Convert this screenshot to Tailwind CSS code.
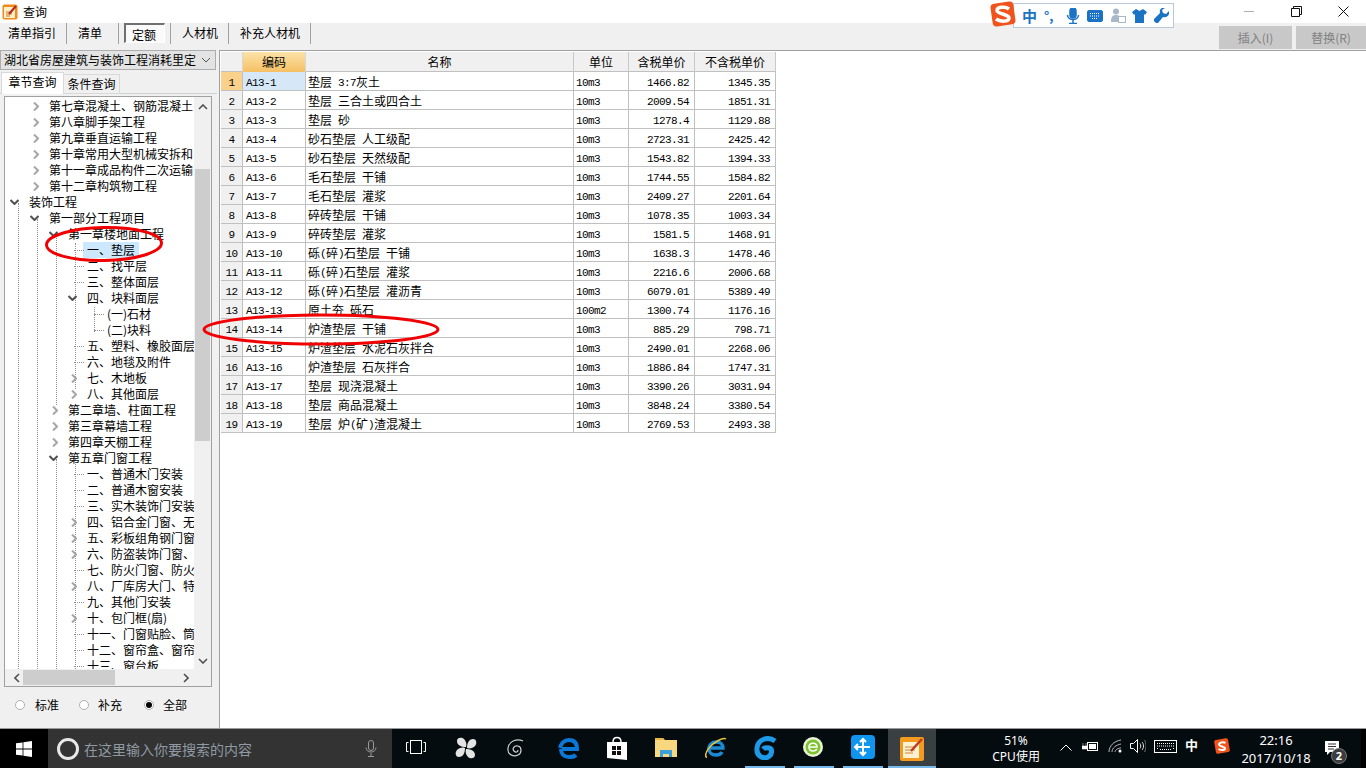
<!DOCTYPE html>
<html lang="zh-CN">
<head>
<meta charset="UTF-8">
<title>查询</title>
<script src="https://cdn.jsdelivr.net/npm/@tailwindcss/browser@4"></script>
</head>
<body class="bg-white">
<div class="relative w-[1366px] h-[768px] overflow-hidden flex flex-col font-['Noto_Sans_CJK_SC',sans-serif] text-[12px] leading-[16px] text-black">

  <!-- title bar -->
  <div class="h-[23px] bg-white flex items-center shrink-0">
    <svg class="ml-[2px] w-[16px] h-[16px]" viewBox="0 0 16 16"><rect x="0.5" y="0.5" width="15" height="15" rx="2" fill="#f08a1c"/><path d="M2 3h11v11H2z" fill="#fdf0c8"/><path d="M4 8h6M4 10h6M4 12h4" stroke="#c9772c"/><path d="M7 10l7-8" stroke="#b3261e" stroke-width="2"/></svg>
    <span class="ml-[5px]">查询</span>
    <div class="ml-auto flex items-center">
      <div class="w-[46px] flex justify-center"><div class="w-[10px] h-px bg-[#b0b0b0]"></div></div>
      <div class="w-[48px] flex justify-center">
        <svg class="w-[11px] h-[11px]" viewBox="0 0 11 11" fill="none" stroke="#111"><path d="M0.5 2.500h8v8h-8zM2.500 2.500v-2h8v8h-2"/></svg>
      </div>
      <div class="w-[46px] flex justify-center">
        <svg class="w-[11px] h-[11px]" viewBox="0 0 11 11" fill="none" stroke="#111"><path d="M0.5 0.5l10 10M10.500 0.5l-10 10"/></svg>
      </div>
    </div>
  </div>

  <!-- toolbar -->
  <div class="h-[27px] bg-[#f0f0f0] flex shrink-0">
    <div class="w-[67px] h-[21px] pl-[8px] pt-[2px] border-r border-[#a0a0a0]">清单指引</div>
    <div class="w-[52px] h-[21px] pl-[11px] pt-[2px] border-r border-[#a0a0a0]">清单</div>
    <div class="w-[52px] h-[21px] pl-[5px] border-r border-[#a0a0a0]">
      <div class="w-[41px] h-[20px] pl-[6px] pt-[2px] border-t-2 border-l-2 border-[#707070] border-r border-b border-r-white border-b-white bg-[#fafafa]">定额</div>
    </div>
    <div class="w-[58px] h-[21px] pl-[11px] pt-[2px] border-r border-[#a0a0a0]">人材机</div>
    <div class="w-[82px] h-[21px] pl-[11px] pt-[2px] border-r border-[#a0a0a0]">补充人材机</div>
    <div class="ml-auto flex gap-[4px] pt-[3px]">
      <div class="w-[73px] h-[23px] bg-[#c8c8c8] text-[#808080] flex items-center justify-center">插入(I)</div>
      <div class="w-[70px] h-[23px] bg-[#c8c8c8] text-[#808080] flex items-center justify-center">替换(R)</div>
    </div>
  </div>

  <!-- main -->
  <div class="h-[678px] flex shrink-0 bg-[#f0f0f0]">
    <!-- left panel -->
    <div class="w-[217px] shrink-0 flex flex-col">
      <div class="w-[216px] h-[20px] bg-[#e3e3e3] border border-[#adadad] flex items-center pl-[3px] shrink-0">
        <span class="whitespace-nowrap">湖北省房屋建筑与装饰工程消耗里定</span>
        <svg class="ml-auto mr-[4px] w-[10px] h-[6px]" viewBox="0 0 10 6" fill="none" stroke="#555"><path d="M1 1l4 4 4-4"/></svg>
      </div>
      <div class="h-[22px] mt-[2px] flex border-b border-[#d0d0d0] shrink-0 relative">
        <div class="w-[63px] h-[22px] ml-px bg-white border border-b-0 border-[#d9d9d9] text-center pt-[1px] z-10">章节查询</div>
        <div class="w-[56px] h-[20px] mt-[2px] bg-[#f0f0f0] border border-[#d9d9d9] border-l-0 text-center pt-[1px]">条件查询</div>
      </div>
      <div class="mt-[2px] ml-[4px] w-[208px] h-[591px] border border-[#a0a0a0] bg-[#f0f0f0] flex flex-col shrink-0">
        <div class="flex h-[572px]">
          <div id="tree" class="relative w-[189px] h-[572px] bg-white overflow-hidden pt-[1px]">
            <!-- tree guides -->
            <div class="absolute left-[13px] top-[106px] h-[466px] border-l border-dotted border-[#909090]"></div>
            <div class="absolute left-[32px] top-[122px] h-[450px] border-l border-dotted border-[#909090]"></div>
            <div class="absolute left-[51px] top-[138px] h-[170px] border-l border-dotted border-[#909090]"></div>
            <div class="absolute left-[51px] top-[362px] h-[210px] border-l border-dotted border-[#909090]"></div>
            <div class="absolute left-[70px] top-[146px] h-[146px] border-l border-dotted border-[#909090]"></div>
            <div class="absolute left-[70px] top-[362px] h-[210px] border-l border-dotted border-[#909090]"></div>
            <div class="absolute left-[89px] top-[210px] h-[25px] border-l border-dotted border-[#909090]"></div>
          </div>
          <div class="w-[17px] flex flex-col items-center relative">
            <svg class="absolute top-[7px] w-[10px] h-[6px]" viewBox="0 0 10 6" fill="none" stroke="#505050" stroke-width="1.6"><path d="M1 5l4-4 4 4"/></svg>
            <div class="absolute top-[72px] w-[15px] h-[272px] bg-[#cdcdcd]"></div>
            <svg class="absolute bottom-[5px] w-[10px] h-[6px]" viewBox="0 0 10 6" fill="none" stroke="#505050" stroke-width="1.6"><path d="M1 1l4 4 4-4"/></svg>
          </div>
        </div>
        <div class="h-[17px] relative flex items-center">
          <svg class="absolute left-[9px] w-[6px] h-[10px]" viewBox="0 0 6 10" fill="none" stroke="#505050" stroke-width="1.6"><path d="M5 1L1 5l4 4"/></svg>
          <div class="absolute left-[18px] w-[92px] h-[15px] bg-[#cdcdcd]"></div>
          <svg class="absolute left-[178px] w-[6px] h-[10px]" viewBox="0 0 6 10" fill="none" stroke="#505050" stroke-width="1.6"><path d="M1 1l4 4-4 4"/></svg>
        </div>
      </div>
      <div class="flex items-center h-[36px] pl-[15px]">
        <span class="w-[10px] h-[10px] rounded-full border border-[#b0b0b0] bg-white"></span><span class="ml-[10px] w-[44px]">标准</span>
        <span class="w-[10px] h-[10px] rounded-full border border-[#b0b0b0] bg-white"></span><span class="ml-[9px] w-[46px]">补充</span>
        <span class="w-[10px] h-[10px] rounded-full border border-[#b0b0b0] bg-white flex items-center justify-center"><span class="w-[6px] h-[6px] rounded-full bg-black"></span></span><span class="ml-[9px]">全部</span>
      </div>
    </div>

    <!-- table area -->
    <div class="ml-[2px] flex-1 bg-white border-t border-l border-[#a0a0a0] pt-px pl-px">
      <div id="grid" class="w-[555px]">
        <div class="grid grid-cols-[22px_63px_268px_55px_66px_81px] h-[20px] border-b border-[#c0c0c0] bg-[#f0f0f0] text-center leading-[20px]">
          <div class="border-r border-[#d8d8d8]"></div>
          <div class="border-r border-[#d8d8d8] bg-gradient-to-b from-[#fbe3a8] to-[#f5c062]">编码</div>
          <div class="border-r border-[#c8c8c8]">名称</div>
          <div class="border-r border-[#c8c8c8]">单位</div>
          <div class="border-r border-[#c8c8c8]">含税单价</div>
          <div class="border-r border-[#c8c8c8]">不含税单价</div>
        </div>
      </div>
    </div>
  </div>

  <!-- taskbar -->
  <div class="h-[40px] bg-[#040c10] flex items-center text-white shrink-0 border-t border-[#9a9a9a]">
    <div class="w-[48px] h-full bg-black flex items-center justify-center">
      <svg class="w-[16px] h-[16px]" viewBox="0 0 16 16" fill="#fff"><path d="M0 2.300l6.600-.9v6.200H0zM7.400 1.300L16 0v7.600H7.400zM0 8.400h6.600v6.200L0 13.700zM7.400 8.400H16V16l-8.600-1.200z"/></svg>
    </div>
    <div class="w-[344px] h-full bg-[#333333] flex items-center pl-[9px]">
      <span class="w-[22px] h-[22px] rounded-full border-[3px] border-[#e8e8e8]"></span>
      <span class="ml-[5px] text-[14px] text-[#8f9aa3] whitespace-nowrap">在这里输入你要搜索的内容</span>
      <svg class="ml-[113px] w-[12px] h-[17px]" viewBox="0 0 12 17" fill="none" stroke="#9a9a9a"><rect x="3.500" y="0.500" width="5" height="10" rx="2.500"/><path d="M1 7.500c0 6 10 6 10 0M6 13v3M3 16.500h6"/></svg>
    </div>
    <div class="relative flex-1 h-full">
      <svg class="absolute left-[14px] top-[11px] w-[20px] h-[14px]" viewBox="0 0 20 14" fill="none" stroke="#fff"><rect x="4.500" y="0.500" width="11" height="13"/><path d="M2.500 2.500H.5v9h2M17.500 2.500h2v9h-2"/></svg>
      <!-- pinned apps -->
      <svg class="absolute left-[62px] top-[7px] w-[24px] h-[24px]" viewBox="0 0 24 24" fill="#e4e4e4"><path d="M12 11C7 11 3 9 3 5s5-4 7-2 3 5 2 8zM13 12c0-5 2-9 6-9s4 5 2 7-5 3-8 2zM12 13c5 0 9 2 9 6s-5 4-7 2-3-5-2-8zM11 12c0 5-2 9-6 9s-4-5-2-7 5-3 8-2z"/></svg>
      <svg class="absolute left-[114px] top-[9px] w-[20px] h-[20px]" viewBox="0 0 20 20" fill="none" stroke="#cfcfcf" stroke-width="1.2"><path d="M17 3C11 0 3 3 2 10s6 9 10 7 4-8 0-9-6 3-4 5 4 1 4-1"/></svg>
      <svg class="absolute left-[166px] top-[8px] w-[22px] h-[22px]" viewBox="0 0 22 22" fill="none"><path d="M4 12h15C19 6 16 3 11 3 6 3 3 7 2 11M3 12c0 5 3 8 8 8 3 0 6-1 7-2" stroke="#0a78d7" stroke-width="4"/></svg>
      <svg class="absolute left-[215px] top-[7px] w-[20px] h-[25px]" viewBox="0 0 20 25"><path d="M0 6h20v18L0 22z" fill="#fff"/><path d="M6 6c0-6 8-6 8 0" fill="none" stroke="#fff" stroke-width="1.5"/><path d="M5 10h4v4H5zM10 10h4v4h-4zM5 15h4v4H5zM10 15h4v4h-4z" fill="#111"/></svg>
      <svg class="absolute left-[263px] top-[8px] w-[22px] h-[20px]" viewBox="0 0 22 20"><path d="M0 1h8l2 2h12v17H0z" fill="#f9d77e"/><path d="M0 1h8l1 2H0z" fill="#e8b84a"/><path d="M5 20v-7h12v7h-3v-3H8v3z" fill="#3aa0dc"/></svg>
      <svg class="absolute left-[312px] top-[7px] w-[24px] h-[24px]" viewBox="0 0 24 24" fill="none"><path d="M5 12h14C19 8 16 6 12.500 6 8 6 5 9 4.500 13M5 13c0 4 3 6 7 6 3 0 5-1 6-3" stroke="#1a8ad4" stroke-width="3.400"/><path d="M22 3C19 1 10 6 5 12 1 17 1 21 3 21.500" stroke="#e8c33a" stroke-width="1.500"/></svg>
      <svg class="absolute left-[362px] top-[7px] w-[24px] h-[24px]" viewBox="0 0 24 24" fill="none"><path d="M21 5C14 0 4 3 3 12s7 11 11 9 5-8 1-9-6 1-6 1" stroke="#1d9be8" stroke-width="5"/></svg>
      <svg class="absolute left-[410px] top-[7px] w-[22px] h-[22px]" viewBox="0 0 22 22" fill="none"><circle cx="11" cy="11" r="10" fill="#e9f5d5"/><circle cx="11" cy="11" r="7.500" fill="#7cc32e"/><path d="M7 11h8c0-5-8-5-8 0s6 5 8 2" stroke="#fff" stroke-width="1.600"/></svg>
      <svg class="absolute left-[459px] top-[6px] w-[24px] h-[24px]" viewBox="0 0 24 24" fill="none"><rect width="24" height="24" rx="4" fill="#0f95ee"/><path d="M12 5v14M5 12h14M9 7l3-3 3 3M9 17l3 3 3-3M7 9l-3 3 3 3" stroke="#fff" stroke-width="2"/></svg>
      <div class="absolute left-[496px] top-0 bottom-0 w-[48px] bg-[#3a3f42] flex items-center justify-center">
        <svg class="w-[24px] h-[24px]" viewBox="0 0 24 24"><rect width="24" height="24" rx="2" fill="#f39a1f"/><rect x="3" y="5" width="16" height="16" fill="#fdf1cf"/><path d="M5 10h10M5 13h10M5 16h8" stroke="#c9883a"/><path d="M11 14L22 2" stroke="#c23a1e" stroke-width="2.500"/></svg>
      </div>
      <!-- running app underlines -->
      <div class="absolute left-[353px] bottom-0 w-[40px] h-[2px] bg-[#76b9ed]"></div>
      <div class="absolute left-[402px] bottom-0 w-[40px] h-[2px] bg-[#76b9ed]"></div>
      <div class="absolute left-[451px] bottom-0 w-[40px] h-[2px] bg-[#76b9ed]"></div>
      <div class="absolute left-[496px] bottom-0 w-[48px] h-[2px] bg-[#76b9ed]"></div>
      <!-- tray -->
      <div class="absolute left-[594px] top-[4px] w-[60px] text-center text-[12px] leading-[16px] font-['Noto_Sans',sans-serif] whitespace-nowrap">51%<br>CPU使用</div>
      <svg class="absolute left-[668px] top-[15px] w-[12px] h-[7px]" viewBox="0 0 12 7" fill="none" stroke="#fff"><path d="M0.500 6.500l5.500-5.500 5.500 5.500"/></svg>
      <svg class="absolute left-[690px] top-[12px] w-[16px] h-[11px]" viewBox="0 0 16 11"><rect x="5.500" y="1.500" width="10" height="8" fill="none" stroke="#fff"/><rect x="7" y="3" width="7" height="5" fill="#fff"/><path d="M1 2v3M4 2v3M0 5h5v3H0z" fill="#fff" stroke="#fff" stroke-width="0.500"/></svg>
      <svg class="absolute left-[716px] top-[10px] w-[14px] h-[14px]" viewBox="0 0 14 14" fill="none" stroke="#b8b8b8"><path d="M1 13C1 7 6 2 13 1M4 13c0-4 4-7 9-8M7 13c0-2 3-4 6-4"/><circle cx="12" cy="12" r="1.500" fill="#fff" stroke="none"/></svg>
      <svg class="absolute left-[738px] top-[10px] w-[16px] h-[14px]" viewBox="0 0 16 14" fill="none" stroke="#fff"><path d="M.5 4.500h3l4-4v13l-4-4h-3z"/><path d="M10 4.500c1 1.500 1 3.500 0 5M12 3c2 2 2 6 0 8" stroke="#ddd"/><path d="M14.500 1c2 3 2 9 0 12" stroke="#777"/></svg>
      <svg class="absolute left-[762px] top-[11px] w-[23px] h-[13px]" viewBox="0 0 23 13" fill="none" stroke="#fff"><rect x="0.500" y="0.500" width="22" height="12"/><path d="M3 3.500h17M3 6h17M3 8.500h1M6 9.500h11M19 8.500h1" stroke-dasharray="1 1"/></svg>
      <span class="absolute left-[793px] top-[8px] text-[13px] font-bold">中</span>
      <svg class="absolute left-[822px] top-[9px] w-[16px] h-[16px]" viewBox="0 0 16 16" fill="none"><rect x="1" y="1" width="14" height="14" rx="2" fill="#f0531c" transform="rotate(-10 8 8)"/><path d="M11.500 5C9 3.500 5 4.500 5 6.500S11 8.500 11 10.500 7 12.500 4.500 11" stroke="#fff" stroke-width="2"/></svg>
      <span class="absolute left-[850px] top-[2px] w-[68px] text-center text-[13px] leading-[18px] font-['Noto_Sans',sans-serif]">22:16</span>
      <span class="absolute left-[840px] top-[20px] w-[88px] text-center text-[13px] leading-[18px] font-['Noto_Sans',sans-serif] whitespace-nowrap">2017/10/18</span>
      <svg class="absolute left-[933px] top-[12px] w-[16px] h-[15px]" viewBox="0 0 16 15" fill="#fff"><path d="M0 0h14v11H5l-3 3v-3H0z"/><path d="M3 3h8M3 5.500h8M3 8h6" stroke="#333"/></svg>
      <span class="absolute left-[939px] top-[19px] w-[16px] h-[16px] rounded-full bg-[#3c3c3c] border border-[#777] text-[11px] leading-[14px] text-center font-bold font-['Noto_Sans',sans-serif]">2</span>
      <div class="absolute right-0 top-0 bottom-0 w-[5px] bg-black"></div>
    </div>
  </div>

  <!-- sogou ime bar floats over the window -->
  <div class="absolute left-[1013px] top-[3px] w-[161px] h-[25px] bg-white border border-[#b8c8d8] flex items-center pl-[8px] text-[#1a73c4]">
    <span class="w-[20px] text-[15px] font-bold">中</span>
    <span class="w-[22px] ml-[2px] text-[13px] font-bold">°,</span>
    <svg class="w-[14px] h-[16px]" viewBox="0 0 14 16" fill="none" stroke="#1a73c4" stroke-width="1.500"><rect x="4" y="0" width="6" height="10" rx="3" fill="#1a73c4"/><path d="M1.500 7c0 6 11 6 11 0M7 12v3M3 15.500h8"/></svg>
    <svg class="ml-[7px] w-[16px] h-[12px]" viewBox="0 0 16 12" fill="none"><rect x="0.500" y="0.500" width="15" height="11" rx="1.500" fill="#1a73c4" stroke="#1a73c4"/><path d="M3 3.500h10M3 6h10M5 8.500h6" stroke="#fff" stroke-dasharray="1 1"/></svg>
    <svg class="ml-[7px] w-[16px] h-[15px]" viewBox="0 0 16 15"><circle cx="6" cy="3.500" r="3" fill="#a9b8c6"/><path d="M1 14c0-6 2-7 5-7s4 1 4 2v5z" fill="#a9b8c6"/><rect x="8.500" y="8.500" width="7" height="6" fill="#fff" stroke="#a9b8c6"/></svg>
    <svg class="ml-[6px] w-[15px] h-[14px]" viewBox="0 0 15 14" fill="#1a73c4"><path d="M4 0l3.500 2L11 0l4 3-2 3-1-1v9H3V5L2 6 0 3z"/></svg>
    <svg class="ml-[7px] w-[15px] h-[15px]" viewBox="0 0 15 15" fill="#1a73c4"><path d="M15 3l-3 3-3-1-1-3 3-2c-3-1-6 1-5 5L0 11c-1 2 2 5 4 4l5-6c4 1 7-2 6-6z"/></svg>
  </div>
  <svg class="absolute left-[989px] top-0 w-[28px] h-[28px]" viewBox="0 0 28 28" fill="none"><rect x="2.500" y="2.500" width="23" height="23" rx="4" fill="#f0531c" transform="rotate(-8 14 14)"/><path d="M20 9C16 6 8 7 8 10.500S20 14 20 18 11 22 7 19" stroke="#fff" stroke-width="3.500"/></svg>

  <!-- red hand drawn marks -->
  <svg class="absolute left-0 top-0 w-[1366px] h-[768px] pointer-events-none" viewBox="0 0 1366 768" fill="none" stroke="#f00000" stroke-width="3">
    <ellipse cx="104" cy="244" rx="57.500" ry="16.500" transform="rotate(-1 104 244)"/>
    <ellipse cx="321" cy="329.500" rx="117" ry="14.500"/>
  </svg>
</div>

<script>
// [level, kind, text] kind: r = closed arrow, d = open arrow, l = leaf
var treeRows = [
  [1,"r","第七章混凝土、钢筋混凝土"],[1,"r","第八章脚手架工程"],[1,"r","第九章垂直运输工程"],
  [1,"r","第十章常用大型机械安拆和"],[1,"r","第十一章成品构件二次运输"],[1,"r","第十二章构筑物工程"],
  [0,"d","装饰工程"],[1,"d","第一部分工程项目"],[2,"d","第一章楼地面工程"],
  [3,"l","一、垫层"],[3,"l","二、找平层"],[3,"l","三、整体面层"],[3,"d","四、块料面层"],
  [4,"l","(一)石材"],[4,"l","(二)块料"],[3,"l","五、塑料、橡胶面层"],[3,"l","六、地毯及附件"],
  [3,"r","七、木地板"],[3,"r","八、其他面层"],[2,"r","第二章墙、柱面工程"],[2,"r","第三章幕墙工程"],
  [2,"r","第四章天棚工程"],[2,"d","第五章门窗工程"],[3,"l","一、普通木门安装"],[3,"l","二、普通木窗安装"],
  [3,"l","三、实木装饰门安装"],[3,"r","四、铝合金门窗、无"],[3,"r","五、彩板组角钢门窗"],[3,"r","六、防盗装饰门窗、"],
  [3,"l","七、防火门窗、防火"],[3,"r","八、厂库房大门、特"],[3,"l","九、其他门安装"],[3,"r","十、包门框(扇)"],
  [3,"l","十一、门窗贴脸、筒"],[3,"l","十二、窗帘盒、窗帘"],[3,"l","十三、窗台板"]
];
var textX = [24, 44, 63, 82, 102];
var tree = document.getElementById("tree");
treeRows.forEach(function (r, i) {
  var x = textX[r[0]];
  var mark = "";
  if (r[1] == "r") mark = '<svg class="absolute top-[4px] w-[6px] h-[9px]" style="left:' + (x - 16) + 'px" viewBox="0 0 6 9" fill="none" stroke="#a6a6a6" stroke-width="2"><path d="M1 .5l4 4-4 4"/></svg>';
  if (r[1] == "d") mark = '<svg class="absolute top-[5px] w-[9px] h-[6px]" style="left:' + (x - 19) + 'px" viewBox="0 0 9 6" fill="none" stroke="#505050" stroke-width="2"><path d="M.5 1l4 4 4-4"/></svg>';
  if (r[1] == "l") mark = '<div class="absolute top-[8px] w-[10px] border-t border-dotted border-[#909090]" style="left:' + (x - 13) + 'px"></div>';
  var sel = i == 9 ? " bg-[#cce8ff] px-[4px] -mx-[4px]" : "";
  tree.insertAdjacentHTML("beforeend",
    '<div class="relative h-[16px] whitespace-nowrap" style="padding-left:' + x + 'px">' + mark +
    '<span class="inline-block h-[16px]' + sel + '">' + r[2] + '</span></div>');
});

var rows = [
  ["A13-1","垫层 3:7灰土","10m3","1466.82","1345.35"],["A13-2","垫层 三合土或四合土","10m3","2009.54","1851.31"],
  ["A13-3","垫层 砂","10m3","1278.4","1129.88"],["A13-4","砂石垫层 人工级配","10m3","2723.31","2425.42"],
  ["A13-5","砂石垫层 天然级配","10m3","1543.82","1394.33"],["A13-6","毛石垫层 干铺","10m3","1744.55","1584.82"],
  ["A13-7","毛石垫层 灌浆","10m3","2409.27","2201.64"],["A13-8","碎砖垫层 干铺","10m3","1078.35","1003.34"],
  ["A13-9","碎砖垫层 灌浆","10m3","1581.5","1468.91"],["A13-10","砾(碎)石垫层 干铺","10m3","1638.3","1478.46"],
  ["A13-11","砾(碎)石垫层 灌浆","10m3","2216.6","2006.68"],["A13-12","砾(碎)石垫层 灌沥青","10m3","6079.01","5389.49"],
  ["A13-13","原土夯 砾石","100m2","1300.74","1176.16"],["A13-14","炉渣垫层 干铺","10m3","885.29","798.71"],
  ["A13-15","炉渣垫层 水泥石灰拌合","10m3","2490.01","2268.06"],["A13-16","炉渣垫层 石灰拌合","10m3","1886.84","1747.31"],
  ["A13-17","垫层 现浇混凝土","10m3","3390.26","3031.94"],["A13-18","垫层 商品混凝土","10m3","3848.24","3380.54"],
  ["A13-19","垫层 炉(矿)渣混凝土","10m3","2769.53","2493.38"]
];
function mono(s) {
  return s.replace(/[ -~]+/g, function (m) {
    return `<span class="relative -top-px font-['Liberation_Mono',monospace] text-[11px] tracking-[-0.6px] whitespace-pre">` + m + `</span>`;
  });
}
var grid = document.getElementById("grid");
rows.forEach(function (r, i) {
  var headBg = i == 0 ? "bg-[#fbd08a]" : "bg-[#f0f0f0]";
  var codeBg = i == 0 ? "bg-[#d6e8f7]" : "bg-white";
  grid.insertAdjacentHTML("beforeend",
    '<div class="grid grid-cols-[22px_63px_268px_55px_66px_81px] grid-rows-[18px] h-[19px] border-b border-[#c0c0c0] leading-[19px]">' +
    '<div class="' + headBg + ' border-r border-[#c0c0c0] text-center">' + mono(String(i + 1)) + '</div>' +
    '<div class="' + codeBg + ' border-r border-[#c0c0c0] pl-[3px]">' + mono(r[0]) + '</div>' +
    '<div class="border-r border-[#c0c0c0] pl-[2px] whitespace-nowrap">' + mono(r[1]) + '</div>' +
    '<div class="border-r border-[#c0c0c0] pl-[2px]">' + mono(r[2]) + '</div>' +
    '<div class="border-r border-[#c0c0c0] pr-[5px] text-right">' + mono(r[3]) + '</div>' +
    '<div class="border-r border-[#c0c0c0] pr-[5px] text-right">' + mono(r[4]) + '</div>' +
    '</div>');
});
</script>
</body>
</html>
